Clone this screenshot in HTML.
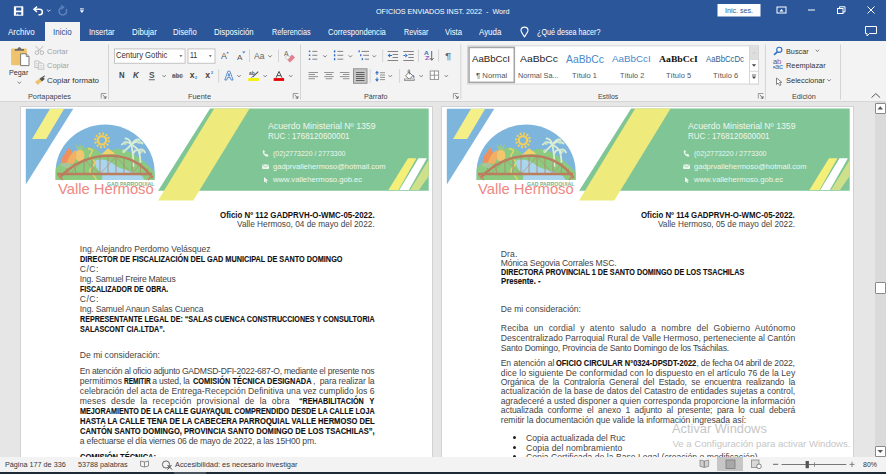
<!DOCTYPE html>
<html><head><meta charset="utf-8">
<style>
html,body{margin:0;padding:0;width:886px;height:474px;overflow:hidden;background:#e6e6e6;}
body{position:relative;font-family:"Liberation Sans",sans-serif;}
.t{position:absolute;white-space:pre;}
.a{position:absolute;}
svg{position:absolute;overflow:visible;}
</style></head><body>
<div class="a" style="left:0;top:0;width:886px;height:41px;background:#2b579a"></div>
<div class="a" style="left:45px;top:22px;width:35px;height:20px;background:#f3f3f3"></div>
<div class="a" style="left:0;top:41px;width:886px;height:60px;background:#f3f3f3"></div>
<div class="a" style="left:0;top:101px;width:886px;height:1px;background:#d6d6d6"></div>
<svg style="left:0;top:0" width="886" height="41"><rect x="13.9" y="6.2" width="9.4" height="9.6" rx="0.6" fill="#fff"/><rect x="16.1" y="7.5" width="5.2" height="3.1" fill="#2b579a"/><rect x="16.1" y="12.2" width="5.2" height="2.5" fill="#2b579a"/><rect x="16.9" y="13.8" width="1.3" height="1" fill="#fff"/><path d="M35 9.3 L39.6 9.3 C43.3 9.3 43.3 14.8 39.6 14.8 L38.5 14.8" fill="none" stroke="#fff" stroke-width="1.5"/><path d="M37 6.6 L34 9.3 L37 12" fill="none" stroke="#fff" stroke-width="1.5"/><path d="M47.2 9.8 L48.8 11.4 L50.4 9.8" fill="none" stroke="#fff" stroke-width="0.9"/><path d="M62.7 7.3 A3.8 3.8 0 1 0 66.1 9.2" fill="none" stroke="#5e82bd" stroke-width="1.5"/><path d="M61.2 5.3 L63.6 7.3 L61.2 9.3" fill="none" stroke="#5e82bd" stroke-width="1.3"/><rect x="80" y="8.4" width="3.8" height="1" fill="#fff"/><path d="M79.8 10.3 L84 10.3 L81.9 12.9 Z" fill="#fff"/><rect x="717.5" y="4" width="43" height="12.5" fill="#fff"/><rect x="777" y="7" width="9" height="6" fill="none" stroke="#fff" stroke-width="1"/><path d="M779.5 11.5 L781.5 9 L783.5 11.5 Z" fill="#fff"/><rect x="808" y="9.5" width="7" height="1" fill="#fff"/><rect x="837.5" y="8.5" width="5.5" height="5" fill="none" stroke="#fff" stroke-width="1"/><path d="M839.5 8.5 L839.5 6.8 L845 6.8 L845 12 L843 12" fill="none" stroke="#fff" stroke-width="1"/><path d="M867.5 6.5 L874.5 13.5 M874.5 6.5 L867.5 13.5" stroke="#fff" stroke-width="1"/><path d="M524.5 36.9 C522.2 33.6 521 31.8 521 30.6 A3.5 3.5 0 0 1 528 30.6 C528 31.8 526.8 33.6 524.5 36.9 Z" fill="none" stroke="#fff" stroke-width="1.1" stroke-linejoin="round"/><path d="M865.5 26.5 L876.5 26.5 L876.5 33.5 L869.5 33.5 L867 36 L867 33.5 L865.5 33.5 Z" fill="none" stroke="#fff" stroke-width="1"/></svg>
<div class="a" style="left:0;top:102px;width:886px;height:355px;background:#e6e6e6"></div>
<div class="a" style="left:875px;top:102px;width:11px;height:355px;background:#dadada"></div>
<div class="a" style="left:20px;top:106px;width:413px;height:360px;background:#d2d2d2"></div>
<div class="a" style="left:21px;top:107px;width:411px;height:360px;background:#fff"></div>
<div class="a" style="left:441px;top:106px;width:413px;height:360px;background:#d2d2d2"></div>
<div class="a" style="left:442px;top:107px;width:411px;height:360px;background:#fff"></div>
<svg style="left:0px;top:0" width="440" height="210"><polygon points="25.8,108.8 73.3,108.8 25.8,184.5" fill="#7db5dd"/><polygon points="50,108.8 64.2,108.8 46.2,139 32,139" fill="#f4ef86"/><polygon points="210.1,108.6 428.7,108.6 428.7,190.8 158.1,190.8" fill="#80c596"/><polygon points="214.2,108.6 249.6,108.6 193.3,200.6 158.1,200.6" fill="#eeea7c"/><polygon points="408,158.2 416.4,158.2 398.5,190 388.4,190" fill="#f4ef78"/><polygon points="418.5,158.2 426.9,158.2 408.8,190 399.3,190" fill="#ffffff"/><polygon points="428.7,160 428.7,176 419,190 410,190" fill="#cfe08a"/><clipPath id="dome0"><path d="M55.6 180 L55.6 172 A49.5 47.5 0 0 1 154.6 172 L154.6 180 Z"/></clipPath><g clip-path="url(#dome0)"><rect x="50" y="120" width="110" height="62" fill="#7db5dd"/><path d="M50 175 C62 160 76 149 88 147.5 C94 147 99 151 103 155 C108 151 114 148.5 120 149 C133 151 146 162 158 176 L158 182 L50 182 Z" fill="#8ccb7f"/><path d="M101 154.8 L108 148.2 L115.5 154 Z" fill="#f2d26a"/><path d="M88 148.5 C95 150 92 152 90 155 C88 158 96 160 95 163 C94 167 86 170 92 174 C96 177 96 179 97 182" fill="none" stroke="#f0d46a" stroke-width="1.3"/><path d="M96 160 C104 158 112 162 116 166 C122 170 132 170 142 176 L146 182 L100 182 C104 178 102 174 100 172 C96 168 94 164 96 160 Z" fill="#a9d6ee"/></g><g fill="#f6cf55"><circle cx="102" cy="140.3" r="4.2" fill="none" stroke="#f6cf55" stroke-width="2.2"/><circle cx="102" cy="140.3" r="6.8" fill="none" stroke="#f6cf55" stroke-width="2.2" stroke-dasharray="1.9 1.66"/></g><ellipse cx="79.8" cy="155.5" rx="4.6" ry="6" fill="#f2c66e"/><path d="M77 149.5 L75.5 143.5 L79 147.5 L80 142.8 L81 147.5 L84.5 143.8 L82.5 149.5 Z" fill="#9cc98a"/><path d="M64 163 C63 156 66 150.5 69.5 147.5 C72 152 73.5 156.5 73 163 Z" fill="#f0905a"/><path d="M67 163.5 C68 157 72 152.5 75.5 150 C77 155 76 160 73.5 164 Z" fill="#f0b066"/><path d="M62 163 C61 159 62.5 156 64.5 154 C66 158 67 161 66.5 164 Z" fill="#ef8e63"/><path d="M60 165 C64 161 70 163 73 167 C69 169 64 168 60 165 Z" fill="#a5c69a"/><g fill="none" stroke="#d9ecd6" stroke-width="1.8" stroke-linecap="round"><path d="M133.5 166 C133.5 158 132.5 150 131.5 144.5"/><path d="M131.5 144.5 C128 141 124.5 141.5 121.8 144.5 M131.5 144.5 C135.5 140.5 139.5 141 142.5 143.5 M131.5 144.5 C130 140 128 138.5 125.5 138.5 M131.5 144.5 C134.5 139.5 137.5 139 139.5 139.5 M131.5 144.5 C128.5 147.5 126 149.5 123.5 152 M131.5 144.5 C135.5 147 138.5 149.5 140.5 153"/><path d="M140.5 162 C140.5 157 139.5 153.5 138.5 150.5 M138.5 150.5 C141.5 148.5 144 149.5 145 152.5 M138.5 150.5 C136 149.5 134.5 151 133.5 153"/></g><g fill="#c9e3c4" opacity="0.9"><circle cx="125" cy="143" r="2"/><circle cx="139" cy="142" r="2"/><circle cx="124" cy="151" r="1.8"/><circle cx="142" cy="151" r="1.8"/></g><path d="M59.4 178 C78 158 98 155.8 109.4 155.8 C122 155.8 140 160 152.6 178" fill="none" stroke="#bb7d5e" stroke-width="2.4"/><path d="M57 174 L152 174" stroke="#bb7d5e" stroke-width="2.6"/><path d="M58 175 L63 180 M152 175 L148 180" stroke="#c4876a" stroke-width="1.6"/><path d="M70 174 L66 168 M76 174 L74 163 M84 174 L84 159.5 M92 174 L92 157.5 M100 174 L100 156.5 M108 174 L108 156 M116 174 L116 156.5 M124 174 L124 157.5 M132 174 L132 159.5 M140 174 L141 163 M146 174 L147.5 168.5" stroke="#b58468" stroke-width="0.8"/><path d="M70 174 L84 159.5 L100 174 L116 156.5 L132 174 L141 163" fill="none" stroke="#b58468" stroke-width="0.6"/></svg>
<svg style="left:0px;top:0" width="440" height="210"><path d="M263 150.5 C262 153 264.5 156.5 267.5 156.8 L268.5 155.2 L266.5 153.8 L265.8 154.6 C265 154 264.4 153.2 264.2 152.4 L265 151.8 L263.8 150 Z" fill="#eef7ef"/><rect x="262.2" y="164.5" width="6.8" height="4.6" rx="1.2" fill="#eef7ef"/><path d="M262.5 165 L265.6 167.2 L268.7 165" fill="none" stroke="#80c596" stroke-width="0.7"/><path d="M264 177 L264 182.5 L265.3 181.2 L266.5 183 L267.4 182.5 L266.3 180.7 L268 180.5 Z" fill="#eef7ef"/></svg>
<svg style="left:420.5px;top:0" width="440" height="210"><polygon points="25.8,108.8 73.3,108.8 25.8,184.5" fill="#7db5dd"/><polygon points="50,108.8 64.2,108.8 46.2,139 32,139" fill="#f4ef86"/><polygon points="210.1,108.6 428.7,108.6 428.7,190.8 158.1,190.8" fill="#80c596"/><polygon points="214.2,108.6 249.6,108.6 193.3,200.6 158.1,200.6" fill="#eeea7c"/><polygon points="408,158.2 416.4,158.2 398.5,190 388.4,190" fill="#f4ef78"/><polygon points="418.5,158.2 426.9,158.2 408.8,190 399.3,190" fill="#ffffff"/><polygon points="428.7,160 428.7,176 419,190 410,190" fill="#cfe08a"/><clipPath id="dome420"><path d="M55.6 180 L55.6 172 A49.5 47.5 0 0 1 154.6 172 L154.6 180 Z"/></clipPath><g clip-path="url(#dome420)"><rect x="50" y="120" width="110" height="62" fill="#7db5dd"/><path d="M50 175 C62 160 76 149 88 147.5 C94 147 99 151 103 155 C108 151 114 148.5 120 149 C133 151 146 162 158 176 L158 182 L50 182 Z" fill="#8ccb7f"/><path d="M101 154.8 L108 148.2 L115.5 154 Z" fill="#f2d26a"/><path d="M88 148.5 C95 150 92 152 90 155 C88 158 96 160 95 163 C94 167 86 170 92 174 C96 177 96 179 97 182" fill="none" stroke="#f0d46a" stroke-width="1.3"/><path d="M96 160 C104 158 112 162 116 166 C122 170 132 170 142 176 L146 182 L100 182 C104 178 102 174 100 172 C96 168 94 164 96 160 Z" fill="#a9d6ee"/></g><g fill="#f6cf55"><circle cx="102" cy="140.3" r="4.2" fill="none" stroke="#f6cf55" stroke-width="2.2"/><circle cx="102" cy="140.3" r="6.8" fill="none" stroke="#f6cf55" stroke-width="2.2" stroke-dasharray="1.9 1.66"/></g><ellipse cx="79.8" cy="155.5" rx="4.6" ry="6" fill="#f2c66e"/><path d="M77 149.5 L75.5 143.5 L79 147.5 L80 142.8 L81 147.5 L84.5 143.8 L82.5 149.5 Z" fill="#9cc98a"/><path d="M64 163 C63 156 66 150.5 69.5 147.5 C72 152 73.5 156.5 73 163 Z" fill="#f0905a"/><path d="M67 163.5 C68 157 72 152.5 75.5 150 C77 155 76 160 73.5 164 Z" fill="#f0b066"/><path d="M62 163 C61 159 62.5 156 64.5 154 C66 158 67 161 66.5 164 Z" fill="#ef8e63"/><path d="M60 165 C64 161 70 163 73 167 C69 169 64 168 60 165 Z" fill="#a5c69a"/><g fill="none" stroke="#d9ecd6" stroke-width="1.8" stroke-linecap="round"><path d="M133.5 166 C133.5 158 132.5 150 131.5 144.5"/><path d="M131.5 144.5 C128 141 124.5 141.5 121.8 144.5 M131.5 144.5 C135.5 140.5 139.5 141 142.5 143.5 M131.5 144.5 C130 140 128 138.5 125.5 138.5 M131.5 144.5 C134.5 139.5 137.5 139 139.5 139.5 M131.5 144.5 C128.5 147.5 126 149.5 123.5 152 M131.5 144.5 C135.5 147 138.5 149.5 140.5 153"/><path d="M140.5 162 C140.5 157 139.5 153.5 138.5 150.5 M138.5 150.5 C141.5 148.5 144 149.5 145 152.5 M138.5 150.5 C136 149.5 134.5 151 133.5 153"/></g><g fill="#c9e3c4" opacity="0.9"><circle cx="125" cy="143" r="2"/><circle cx="139" cy="142" r="2"/><circle cx="124" cy="151" r="1.8"/><circle cx="142" cy="151" r="1.8"/></g><path d="M59.4 178 C78 158 98 155.8 109.4 155.8 C122 155.8 140 160 152.6 178" fill="none" stroke="#bb7d5e" stroke-width="2.4"/><path d="M57 174 L152 174" stroke="#bb7d5e" stroke-width="2.6"/><path d="M58 175 L63 180 M152 175 L148 180" stroke="#c4876a" stroke-width="1.6"/><path d="M70 174 L66 168 M76 174 L74 163 M84 174 L84 159.5 M92 174 L92 157.5 M100 174 L100 156.5 M108 174 L108 156 M116 174 L116 156.5 M124 174 L124 157.5 M132 174 L132 159.5 M140 174 L141 163 M146 174 L147.5 168.5" stroke="#b58468" stroke-width="0.8"/><path d="M70 174 L84 159.5 L100 174 L116 156.5 L132 174 L141 163" fill="none" stroke="#b58468" stroke-width="0.6"/></svg>
<svg style="left:420.5px;top:0" width="440" height="210"><path d="M263 150.5 C262 153 264.5 156.5 267.5 156.8 L268.5 155.2 L266.5 153.8 L265.8 154.6 C265 154 264.4 153.2 264.2 152.4 L265 151.8 L263.8 150 Z" fill="#eef7ef"/><rect x="262.2" y="164.5" width="6.8" height="4.6" rx="1.2" fill="#eef7ef"/><path d="M262.5 165 L265.6 167.2 L268.7 165" fill="none" stroke="#80c596" stroke-width="0.7"/><path d="M264 177 L264 182.5 L265.3 181.2 L266.5 183 L267.4 182.5 L266.3 180.7 L268 180.5 Z" fill="#eef7ef"/></svg>
<div class="a" style="left:512.6px;top:436.3px;width:3px;height:3px;border-radius:50%;background:#222"></div>
<div class="a" style="left:512.6px;top:445.7px;width:3px;height:3px;border-radius:50%;background:#222"></div>
<div class="a" style="left:512.6px;top:455.0px;width:3px;height:3px;border-radius:50%;background:#222"></div>
<div class="a" style="left:875px;top:103px;width:9px;height:9px;border:1px solid #8a8a8a;background:#fff;border-radius:1px"></div>
<svg style="left:0;top:0" width="886" height="474"><path d="M877.5 109.5 L880.3 106.3 L883 109.5 Z" fill="#555"/></svg>
<div class="a" style="left:875px;top:282px;width:9px;height:10px;border:1px solid #8a8a8a;background:#fff;border-radius:1px"></div>
<div class="a" style="left:875px;top:446px;width:9px;height:9px;border:1px solid #8a8a8a;background:#fff;border-radius:1px"></div>
<svg style="left:0;top:0" width="886" height="474"><path d="M877.5 450 L880.3 453 L883 450 Z" fill="#555"/></svg>
<svg style="left:0;top:0" width="886" height="105"><rect x="108.0" y="44.5" width="1" height="55.0" fill="#d4d4d4"/><rect x="300.0" y="44.5" width="1" height="55.0" fill="#d4d4d4"/><rect x="460.3" y="44.5" width="1" height="55.0" fill="#d4d4d4"/><rect x="764.9" y="44.5" width="1" height="55.0" fill="#d4d4d4"/><rect x="840.0" y="44.5" width="1" height="55.0" fill="#d4d4d4"/><rect x="249.0" y="49.5" width="1" height="12.5" fill="#d4d4d4"/><rect x="278.0" y="49.5" width="1" height="12.5" fill="#d4d4d4"/><rect x="218.2" y="69" width="1" height="14" fill="#d4d4d4"/><rect x="382.2" y="49.5" width="1" height="12.5" fill="#d4d4d4"/><rect x="418.0" y="49.5" width="1" height="12.5" fill="#d4d4d4"/><rect x="438.1" y="49.5" width="1" height="12.5" fill="#d4d4d4"/><rect x="369.7" y="69" width="1" height="14" fill="#d4d4d4"/><rect x="399.1" y="69" width="1" height="14" fill="#d4d4d4"/><rect x="11.1" y="48.5" width="15.7" height="16.8" rx="1" fill="#efc36d"/><path d="M14.8 50.8 L14.8 49 L17.5 49 C17.8 46.5 21 46.5 21.3 49 L24 49 L24 50.8 Z" fill="#6b6b6b"/><path d="M20.6 53.8 L26.3 53.8 L29 56.5 L29 65.6 L20.6 65.6 Z" fill="#fff" stroke="#6e6e6e" stroke-width="0.9"/><path d="M26.3 53.8 L26.3 56.5 L29 56.5" fill="none" stroke="#6e6e6e" stroke-width="0.8"/><path d="M17.6 81.69999999999999 L19.3 83.5 L21.0 81.69999999999999" fill="none" stroke="#666" stroke-width="0.8"/><circle cx="36.9" cy="52.7" r="1.8" fill="none" stroke="#b0b0b0" stroke-width="0.9"/><circle cx="41.9" cy="52.7" r="1.8" fill="none" stroke="#b0b0b0" stroke-width="0.9"/><path d="M35.5 46.2 L41 51.2 M43.3 46.2 L37.8 51.2" stroke="#b0b0b0" stroke-width="0.9"/><path d="M34.8 61 L38.8 61 L40.3 62.5 L40.3 67.5 L34.8 67.5 Z" fill="none" stroke="#b5b5b5" stroke-width="0.8"/><path d="M38.3 63 L42.3 63 L43.8 64.5 L43.8 69.3 L38.3 69.3 Z" fill="#f3f3f3" stroke="#b5b5b5" stroke-width="0.8"/><path d="M39.5 65.5 L42.5 65.5 M39.5 67.3 L42.5 67.3 M36 63.5 L37.5 63.5 M36 65.3 L37.5 65.3" stroke="#c0c0c0" stroke-width="0.6"/><path d="M35 81.8 L39.8 78.5 L42 81.2 L37.6 85 Z" fill="#efc36d"/><path d="M39.5 78.8 L42.6 76.5 L44.8 79 L42 81.5 Z" fill="#555"/><path d="M43 76.8 L45 75.8" stroke="#555" stroke-width="1"/><path d="M101.2 98.5 L101.2 93.5 L106.2 93.5" fill="none" stroke="#777" stroke-width="0.7"/><path d="M102.7 95.0 L105.9 98.2 M105.9 96.0 L105.9 98.2 L103.7 98.2" fill="none" stroke="#555" stroke-width="0.8"/><rect x="114.5" y="48.9" width="70.6" height="14.4" fill="#fff" stroke="#c3c3c3" stroke-width="1"/><rect x="188" y="48.9" width="27" height="14.4" fill="#fff" stroke="#c3c3c3" stroke-width="1"/><path d="M179.5 55.3 L182.3 55.3 L180.9 57 Z" fill="#444"/><path d="M208.9 55.3 L211.7 55.3 L210.3 57 Z" fill="#444"/><path d="M162.5 75.1 L164.2 76.9 L165.89999999999998 75.1" fill="none" stroke="#666" stroke-width="0.8"/><rect x="148.8" y="79.4" width="6.0" height="0.8" fill="#444"/><rect x="172" y="75.6" width="11.2" height="0.8" fill="#666"/><path d="M226.1 53.3 L227.6 51.7 L229.1 53.3 Z" fill="#3a7bd5"/><path d="M242.2 51.6 L245.4 51.6 L243.8 53.4 Z" fill="#3a7bd5"/><path d="M268.40000000000003 55.300000000000004 L270.1 57.1 L271.8 55.300000000000004" fill="none" stroke="#666" stroke-width="0.8"/><path d="M287 59.5 L292 54.5 L295 57.5 L290 62.5 Z" fill="#e57f8c"/><path d="M285 57.5 L287.5 55 L290 57.5 L287.5 60 Z" fill="#f2f2f2" stroke="#aaa" stroke-width="0.5"/><path d="M224.8 80 L227.9 71.2 L229.9 71.2 L233.1 80 L231.1 80 L230.3 77.6 L227.5 77.6 L226.8 80 Z M228.0 76 L229.8 76 L228.9 73.4 Z" fill="none" stroke="#4f86c8" stroke-width="0.9" stroke-linejoin="round"/><path d="M237.3 75.1 L239 76.9 L240.7 75.1" fill="none" stroke="#666" stroke-width="0.8"/><rect x="248.2" y="78.1" width="10.7" height="2.8" fill="#f4f000"/><path d="M252.5 77.2 L258.2 71.6" stroke="#555" stroke-width="1.1"/><path d="M251.4 77.6 L252.6 76.4" stroke="#2e6fc4" stroke-width="0.9"/><path d="M263.5 75.1 L265.2 76.9 L266.9 75.1" fill="none" stroke="#666" stroke-width="0.8"/><rect x="273.7" y="78.1" width="10.4" height="2.8" fill="#e80000"/><path d="M276 77.8 L279 71.4 L282 77.8 M277 75.6 L281 75.6" fill="none" stroke="#444" stroke-width="0.9"/><path d="M289.0 75.1 L290.7 76.9 L292.4 75.1" fill="none" stroke="#666" stroke-width="0.8"/><path d="M293.2 98.5 L293.2 93.5 L298.2 93.5" fill="none" stroke="#777" stroke-width="0.7"/><path d="M294.7 95.0 L297.9 98.2 M297.9 96.0 L297.9 98.2 L295.7 98.2" fill="none" stroke="#555" stroke-width="0.8"/><rect x="308.8" y="50.599999999999994" width="1.5" height="1.5" fill="#2e6fc4"/><rect x="312.3" y="50.9" width="5" height="0.9" fill="#777"/><rect x="308.8" y="54.49999999999999" width="1.5" height="1.5" fill="#2e6fc4"/><rect x="312.3" y="54.8" width="5" height="0.9" fill="#777"/><rect x="308.8" y="58.39999999999999" width="1.5" height="1.5" fill="#2e6fc4"/><rect x="312.3" y="58.699999999999996" width="5" height="0.9" fill="#777"/><path d="M323.2 55.300000000000004 L324.9 57.1 L326.59999999999997 55.300000000000004" fill="none" stroke="#666" stroke-width="0.8"/><rect x="333.9" y="50.3" width="1.4" height="2.2" fill="#2e6fc4"/><rect x="337.4" y="50.9" width="5.8" height="0.9" fill="#777"/><rect x="333.9" y="54.199999999999996" width="1.4" height="2.2" fill="#2e6fc4"/><rect x="337.4" y="54.8" width="5.8" height="0.9" fill="#777"/><rect x="333.9" y="58.099999999999994" width="1.4" height="2.2" fill="#2e6fc4"/><rect x="337.4" y="58.699999999999996" width="5.8" height="0.9" fill="#777"/><path d="M348.7 55.300000000000004 L350.4 57.1 L352.09999999999997 55.300000000000004" fill="none" stroke="#666" stroke-width="0.8"/><rect x="358.5" y="50.3" width="1.3" height="2" fill="#2e6fc4"/><rect x="361.5" y="50.9" width="7.5" height="0.9" fill="#777"/><rect x="360.1" y="54.199999999999996" width="1.3" height="2" fill="#2e6fc4"/><rect x="363.1" y="54.8" width="5.9" height="0.9" fill="#777"/><rect x="361.7" y="58.099999999999994" width="1.3" height="2" fill="#2e6fc4"/><rect x="364.7" y="58.699999999999996" width="4.3" height="0.9" fill="#777"/><path d="M372.6 55.300000000000004 L374.3 57.1 L376.0 55.300000000000004" fill="none" stroke="#666" stroke-width="0.8"/><rect x="387.6" y="51" width="10.5" height="0.9" fill="#777"/><rect x="392.6" y="54" width="5.5" height="0.9" fill="#777"/><rect x="392.6" y="57" width="5.5" height="0.9" fill="#777"/><rect x="387.6" y="60" width="10.5" height="0.9" fill="#777"/><path d="M387.6 55.5 L390.1 53.5 L390.1 57.5 Z M389.6 55 L392.1 55 L392.1 56 L389.6 56 Z" fill="#2e6fc4"/><rect x="403.3" y="51" width="10.5" height="0.9" fill="#777"/><rect x="408.3" y="54" width="5.5" height="0.9" fill="#777"/><rect x="408.3" y="57" width="5.5" height="0.9" fill="#777"/><rect x="403.3" y="60" width="10.5" height="0.9" fill="#777"/><path d="M407.8 55.5 L405.3 53.5 L405.3 57.5 Z M403.3 55 L405.8 55 L405.8 56 L403.3 56 Z" fill="#2e6fc4"/><path d="M431.7 51 L431.7 60 M429.8 58 L431.7 60.3 L433.6 58" fill="none" stroke="#555" stroke-width="0.9"/><rect x="308.5" y="72.0" width="9.5" height="0.9" fill="#888"/><rect x="308.5" y="74.1" width="6.5" height="0.9" fill="#888"/><rect x="308.5" y="76.2" width="9.5" height="0.9" fill="#888"/><rect x="308.5" y="78.3" width="6.5" height="0.9" fill="#888"/><rect x="324.2" y="72.0" width="9.5" height="0.9" fill="#888"/><rect x="325.7" y="74.1" width="6.5" height="0.9" fill="#888"/><rect x="324.2" y="76.2" width="9.5" height="0.9" fill="#888"/><rect x="325.7" y="78.3" width="6.5" height="0.9" fill="#888"/><rect x="339.9" y="72.0" width="9.5" height="0.9" fill="#888"/><rect x="342.9" y="74.1" width="6.5" height="0.9" fill="#888"/><rect x="339.9" y="76.2" width="9.5" height="0.9" fill="#888"/><rect x="342.9" y="78.3" width="6.5" height="0.9" fill="#888"/><rect x="353.5" y="68.8" width="13.5" height="14.5" fill="#c6c6c6" stroke="#919191" stroke-width="1"/><rect x="356" y="72" width="8.5" height="0.9" fill="#555"/><rect x="356" y="74" width="8.5" height="0.9" fill="#555"/><rect x="356" y="76" width="8.5" height="0.9" fill="#555"/><rect x="356" y="78" width="8.5" height="0.9" fill="#555"/><rect x="356" y="80" width="8.5" height="0.9" fill="#555"/><path d="M377 72.5 L377 75 M377 77.5 L377 80" stroke="#2e6fc4" stroke-width="1"/><path d="M375 73.3 L377 70.8 L379 73.3 Z M375 79.2 L377 81.7 L379 79.2 Z" fill="#2e6fc4"/><rect x="380" y="72.3" width="5" height="0.9" fill="#888"/><rect x="380" y="74.6" width="5" height="0.9" fill="#888"/><rect x="380" y="76.89999999999999" width="5" height="0.9" fill="#888"/><rect x="380" y="79.2" width="5" height="0.9" fill="#888"/><path d="M388.6 75.1 L390.3 76.9 L392.0 75.1" fill="none" stroke="#666" stroke-width="0.8"/><path d="M405.6 75.8 L409.2 72.2 L412.8 75.8 L409.2 79.4 Z" fill="#fff" stroke="#666" stroke-width="0.9"/><path d="M408.2 73 L408.2 70.5 C408.2 69.6 409.6 69.6 409.6 70.5 L409.6 74.5" fill="none" stroke="#666" stroke-width="0.8"/><path d="M413.2 74.8 C414.6 76.2 414.8 77.4 413.9 78 C413.0 77.4 412.9 76.2 413.2 74.8 Z" fill="#2e6fc4"/><rect x="404.3" y="79" width="10.2" height="1.6" fill="#fafafa" stroke="#777" stroke-width="0.7"/><path d="M419.5 75.1 L421.2 76.9 L422.9 75.1" fill="none" stroke="#666" stroke-width="0.8"/><rect x="430.2" y="71" width="8.4" height="8.4" fill="#fff" stroke="#8c8c8c" stroke-width="0.9"/><path d="M434.4 71 L434.4 79.4 M430.2 75.2 L438.6 75.2" stroke="#8c8c8c" stroke-width="0.9"/><path d="M444.6 75.1 L446.3 76.9 L448.0 75.1" fill="none" stroke="#666" stroke-width="0.8"/><path d="M453.4 98.5 L453.4 93.5 L458.4 93.5" fill="none" stroke="#777" stroke-width="0.7"/><path d="M454.9 95.0 L458.09999999999997 98.2 M458.09999999999997 96.0 L458.09999999999997 98.2 L455.9 98.2" fill="none" stroke="#555" stroke-width="0.8"/><rect x="467.5" y="45.8" width="291" height="38.2" fill="#fff" stroke="#d6d6d6" stroke-width="1"/><rect x="469" y="47.4" width="45.3" height="35" fill="#fff" stroke="#a6a6a6" stroke-width="1.6"/><rect x="749.5" y="45.8" width="9" height="38.2" fill="#fff" stroke="#d6d6d6" stroke-width="1"/><rect x="750" y="46.3" width="8" height="13" fill="#dedede"/><rect x="749.5" y="59.3" width="9" height="12" fill="none" stroke="#d6d6d6" stroke-width="1"/><path d="M752.8 53.5 L754 52.3 L755.2 53.5" fill="none" stroke="#b8b8b8" stroke-width="0.7"/><path d="M751.9 64.2 L756.1 64.2 L754 66.8 Z" fill="#444"/><rect x="751.9" y="74.6" width="4.2" height="0.8" fill="#444"/><path d="M751.9 76.4 L756.1 76.4 L754 79 Z" fill="#444"/><path d="M758.3 98.5 L758.3 93.5 L763.3 93.5" fill="none" stroke="#777" stroke-width="0.7"/><path d="M759.8 95.0 L763.0 98.2 M763.0 96.0 L763.0 98.2 L760.8 98.2" fill="none" stroke="#555" stroke-width="0.8"/><circle cx="779.3" cy="49.8" r="2.6" fill="none" stroke="#2e6fc4" stroke-width="1.1"/><path d="M777.4 51.8 L774 54.8" stroke="#2e6fc4" stroke-width="1.6"/><path d="M815.6999999999999 49.7 L817.4 51.5 L819.1 49.7" fill="none" stroke="#666" stroke-width="0.8"/><path d="M776.5 78 L776.5 84.5 L778 83 L779.7 85.5 L781 84.8 L779.6 82.4 L781.8 82.3 Z" fill="#fff" stroke="#666" stroke-width="0.8"/><path d="M827.4 79.3 L829.1 81.10000000000001 L830.8000000000001 79.3" fill="none" stroke="#666" stroke-width="0.8"/><path d="M773.2 67.2 L775.2 67.2 M773.6 66 L774.6 67.2 L773.6 68.4" fill="none" stroke="#2e6fc4" stroke-width="0.8"/><path d="M871.5 97.6 L875.8 93.6 L880.1 97.6" fill="none" stroke="#555" stroke-width="1"/></svg>
<div class="t" style="left:375.60px;top:7.80px;font:normal 8px/8px 'Liberation Sans',sans-serif;color:#fff;transform:scaleX(0.8966);transform-origin:0 0;">OFICIOS ENVIADOS INST. 2022  -  Word</div>
<div class="t" style="left:724.80px;top:6.80px;font:normal 8px/8px 'Liberation Sans',sans-serif;color:#2b579a;transform:scaleX(0.8899);transform-origin:0 0;">Inic. ses.</div>
<div class="t" style="left:8.20px;top:27.89px;font:normal 8.6px/8.6px 'Liberation Sans',sans-serif;color:#fff;transform:scaleX(0.9282);transform-origin:0 0;">Archivo</div>
<div class="t" style="left:88.60px;top:27.89px;font:normal 8.6px/8.6px 'Liberation Sans',sans-serif;color:#fff;transform:scaleX(0.8785);transform-origin:0 0;">Insertar</div>
<div class="t" style="left:131.60px;top:27.89px;font:normal 8.6px/8.6px 'Liberation Sans',sans-serif;color:#fff;transform:scaleX(0.9106);transform-origin:0 0;">Dibujar</div>
<div class="t" style="left:173.30px;top:27.89px;font:normal 8.6px/8.6px 'Liberation Sans',sans-serif;color:#fff;transform:scaleX(0.8855);transform-origin:0 0;">Diseño</div>
<div class="t" style="left:214.40px;top:27.89px;font:normal 8.6px/8.6px 'Liberation Sans',sans-serif;color:#fff;transform:scaleX(0.9032);transform-origin:0 0;">Disposición</div>
<div class="t" style="left:272.00px;top:27.89px;font:normal 8.6px/8.6px 'Liberation Sans',sans-serif;color:#fff;transform:scaleX(0.8395);transform-origin:0 0;">Referencias</div>
<div class="t" style="left:328.40px;top:27.89px;font:normal 8.6px/8.6px 'Liberation Sans',sans-serif;color:#fff;transform:scaleX(0.8831);transform-origin:0 0;">Correspondencia</div>
<div class="t" style="left:403.70px;top:27.89px;font:normal 8.6px/8.6px 'Liberation Sans',sans-serif;color:#fff;transform:scaleX(0.8339);transform-origin:0 0;">Revisar</div>
<div class="t" style="left:444.70px;top:27.89px;font:normal 8.6px/8.6px 'Liberation Sans',sans-serif;color:#fff;transform:scaleX(0.8917);transform-origin:0 0;">Vista</div>
<div class="t" style="left:479.00px;top:27.89px;font:normal 8.6px/8.6px 'Liberation Sans',sans-serif;color:#fff;transform:scaleX(0.9208);transform-origin:0 0;">Ayuda</div>
<div class="t" style="left:536.60px;top:27.89px;font:normal 8.6px/8.6px 'Liberation Sans',sans-serif;color:#fff;transform:scaleX(0.8346);transform-origin:0 0;">¿Qué desea hacer?</div>
<div class="t" style="left:52.60px;top:27.89px;font:normal 8.6px/8.6px 'Liberation Sans',sans-serif;color:#1f4e8f;transform:scaleX(0.9321);transform-origin:0 0;">Inicio</div>
<div class="t" style="left:57.60px;top:180.65px;font:normal 15.0px/15.0px 'Liberation Sans',sans-serif;color:#ef8882;transform:scaleX(0.9839);transform-origin:0 0;">Valle Hermoso</div>
<div class="t" style="left:106.60px;top:181.75px;font:bold 5.0px/5.0px 'Liberation Sans',sans-serif;color:#7fb086;transform:scaleX(1.0339);transform-origin:0 0;">GAD PARROQUIAL</div>
<div class="t" style="left:267.60px;top:122.46px;font:normal 8.4px/8.4px 'Liberation Sans',sans-serif;color:#eef7ef;transform:scaleX(1.0376);transform-origin:0 0;">Acuerdo Ministerial Nº 1359</div>
<div class="t" style="left:267.60px;top:132.36px;font:normal 8.4px/8.4px 'Liberation Sans',sans-serif;color:#eef7ef;transform:scaleX(0.9511);transform-origin:0 0;">RUC : 1768120600001</div>
<div class="t" style="left:273.20px;top:150.28px;font:normal 7.2px/7.2px 'Liberation Sans',sans-serif;color:#eef7ef;transform:scaleX(0.9699);transform-origin:0 0;">(02)2773220 / 2773300</div>
<div class="t" style="left:273.20px;top:163.08px;font:normal 7.2px/7.2px 'Liberation Sans',sans-serif;color:#eef7ef;transform:scaleX(1.0497);transform-origin:0 0;">gadprvallehermoso@hotmail.com</div>
<div class="t" style="left:273.20px;top:175.58px;font:normal 7.2px/7.2px 'Liberation Sans',sans-serif;color:#eef7ef;transform:scaleX(1.0683);transform-origin:0 0;">www.vallehermoso.gob.ec</div>
<div class="t" style="left:478.10px;top:180.65px;font:normal 15.0px/15.0px 'Liberation Sans',sans-serif;color:#ef8882;transform:scaleX(0.9839);transform-origin:0 0;">Valle Hermoso</div>
<div class="t" style="left:527.10px;top:181.75px;font:bold 5.0px/5.0px 'Liberation Sans',sans-serif;color:#7fb086;transform:scaleX(1.0339);transform-origin:0 0;">GAD PARROQUIAL</div>
<div class="t" style="left:688.10px;top:122.46px;font:normal 8.4px/8.4px 'Liberation Sans',sans-serif;color:#eef7ef;transform:scaleX(1.0376);transform-origin:0 0;">Acuerdo Ministerial Nº 1359</div>
<div class="t" style="left:688.10px;top:132.36px;font:normal 8.4px/8.4px 'Liberation Sans',sans-serif;color:#eef7ef;transform:scaleX(0.9511);transform-origin:0 0;">RUC : 1768120600001</div>
<div class="t" style="left:693.70px;top:150.28px;font:normal 7.2px/7.2px 'Liberation Sans',sans-serif;color:#eef7ef;transform:scaleX(0.9699);transform-origin:0 0;">(02)2773220 / 2773300</div>
<div class="t" style="left:693.70px;top:163.08px;font:normal 7.2px/7.2px 'Liberation Sans',sans-serif;color:#eef7ef;transform:scaleX(1.0497);transform-origin:0 0;">gadprvallehermoso@hotmail.com</div>
<div class="t" style="left:693.70px;top:175.58px;font:normal 7.2px/7.2px 'Liberation Sans',sans-serif;color:#eef7ef;transform:scaleX(1.0683);transform-origin:0 0;">www.vallehermoso.gob.ec</div>
<div class="t" style="left:220.00px;top:211.53px;font:bold 8.2px/8.2px 'Liberation Sans',sans-serif;color:#111;transform:scaleX(0.9646);transform-origin:0 0;">Oficio Nº 112 GADPRVH-O-WMC-05-2022.</div>
<div class="t" style="left:236.90px;top:220.26px;font:normal 8.4px/8.4px 'Liberation Sans',sans-serif;color:#444444;transform:scaleX(0.9870);transform-origin:0 0;">Valle Hermoso, 04 de mayo del 2022.</div>
<div class="t" style="left:79.80px;top:245.49px;font:normal 8.6px/8.6px 'Liberation Sans',sans-serif;color:#444444;letter-spacing:-0.035px;transform-origin:0 0;">Ing. Alejandro Perdomo Velásquez</div>
<div class="t" style="left:79.80px;top:255.06px;font:bold 8.4px/8.4px 'Liberation Sans',sans-serif;color:#111;transform:scaleX(0.8715);transform-origin:0 0;-webkit-text-stroke:0.12px #111;">DIRECTOR DE FISCALIZACIÓN DEL GAD MUNICIPAL DE SANTO DOMINGO</div>
<div class="t" style="left:79.80px;top:265.39px;font:normal 8.6px/8.6px 'Liberation Sans',sans-serif;color:#444444;letter-spacing:0.438px;transform-origin:0 0;">C/C:</div>
<div class="t" style="left:79.80px;top:275.39px;font:normal 8.6px/8.6px 'Liberation Sans',sans-serif;color:#444444;letter-spacing:-0.224px;transform-origin:0 0;">Ing. Samuel Freire Mateus</div>
<div class="t" style="left:79.80px;top:285.06px;font:bold 8.4px/8.4px 'Liberation Sans',sans-serif;color:#111;transform:scaleX(0.8360);transform-origin:0 0;-webkit-text-stroke:0.12px #111;">FISCALIZADOR DE OBRA.</div>
<div class="t" style="left:79.80px;top:295.39px;font:normal 8.6px/8.6px 'Liberation Sans',sans-serif;color:#444444;letter-spacing:0.438px;transform-origin:0 0;">C/C:</div>
<div class="t" style="left:79.80px;top:305.39px;font:normal 8.6px/8.6px 'Liberation Sans',sans-serif;color:#444444;letter-spacing:-0.167px;transform-origin:0 0;">Ing. Samuel Anaun Salas Cuenca</div>
<div class="t" style="left:79.80px;top:315.16px;font:bold 8.4px/8.4px 'Liberation Sans',sans-serif;color:#111;transform:scaleX(0.8520);transform-origin:0 0;-webkit-text-stroke:0.12px #111;">REPRESENTANTE LEGAL DE: “SALAS CUENCA CONSTRUCCIONES Y CONSULTORIA</div>
<div class="t" style="left:79.80px;top:325.26px;font:bold 8.4px/8.4px 'Liberation Sans',sans-serif;color:#111;transform:scaleX(0.8529);transform-origin:0 0;-webkit-text-stroke:0.12px #111;">SALASCONT CIA.LTDA”.</div>
<div class="t" style="left:79.80px;top:351.39px;font:normal 8.6px/8.6px 'Liberation Sans',sans-serif;color:#444444;letter-spacing:-0.003px;transform-origin:0 0;">De mi consideración:</div>
<div class="t" style="left:79.80px;top:366.99px;font:normal 8.6px/8.6px 'Liberation Sans',sans-serif;color:#444444;letter-spacing:-0.258px;transform-origin:0 0;">En atención al oficio adjunto GADMSD-DFI-2022-687-O, mediante el presente nos</div>
<div class="t" style="left:79.70px;top:376.99px;font:normal 8.6px/8.6px 'Liberation Sans',sans-serif;color:#444444;letter-spacing:0.030px;transform-origin:0 0;">permitimos</div>
<div class="t" style="left:123.70px;top:376.66px;font:bold 8.4px/8.4px 'Liberation Sans',sans-serif;color:#111;transform:scaleX(0.7782);transform-origin:0 0;-webkit-text-stroke:0.12px #111;">REMITIR</div>
<div class="t" style="left:152.20px;top:376.99px;font:normal 8.6px/8.6px 'Liberation Sans',sans-serif;color:#444444;letter-spacing:-0.206px;transform-origin:0 0;">a usted, la</div>
<div class="t" style="left:192.80px;top:376.66px;font:bold 8.4px/8.4px 'Liberation Sans',sans-serif;color:#111;transform:scaleX(0.8832);transform-origin:0 0;-webkit-text-stroke:0.12px #111;">COMISIÓN TÉCNICA DESIGNADA</div>
<div class="t" style="left:313.00px;top:376.99px;font:normal 8.6px/8.6px 'Liberation Sans',sans-serif;color:#444444;letter-spacing:-0.591px;transform-origin:0 0;">,</div>
<div class="t" style="left:319.70px;top:376.99px;font:normal 8.6px/8.6px 'Liberation Sans',sans-serif;color:#444444;letter-spacing:-0.136px;transform-origin:0 0;">para realizar la</div>
<div class="t" style="left:79.80px;top:387.09px;font:normal 8.6px/8.6px 'Liberation Sans',sans-serif;color:#444444;letter-spacing:0.038px;transform-origin:0 0;">celebración del acta de Entrega-Recepción Definitiva una vez cumplido los 6</div>
<div class="t" style="left:79.70px;top:397.09px;font:normal 8.6px/8.6px 'Liberation Sans',sans-serif;color:#444444;letter-spacing:0.175px;transform-origin:0 0;">meses  desde  la  recepción  provisional  de  la  obra</div>
<div class="t" style="left:299.10px;top:396.76px;font:bold 8.4px/8.4px 'Liberation Sans',sans-serif;color:#111;transform:scaleX(0.8603);transform-origin:0 0;-webkit-text-stroke:0.12px #111;">“REHABILITACIÓN   Y</div>
<div class="t" style="left:79.80px;top:406.76px;font:bold 8.4px/8.4px 'Liberation Sans',sans-serif;color:#111;transform:scaleX(0.8621);transform-origin:0 0;-webkit-text-stroke:0.12px #111;">MEJORAMIENTO DE LA CALLE GUAYAQUIL COMPRENDIDO DESDE LA CALLE LOJA</div>
<div class="t" style="left:79.80px;top:416.76px;font:bold 8.4px/8.4px 'Liberation Sans',sans-serif;color:#111;transform:scaleX(0.9083);transform-origin:0 0;-webkit-text-stroke:0.12px #111;">HASTA LA CALLE TENA DE LA CABECERA PARROQUIAL VALLE HERMOSO DEL</div>
<div class="t" style="left:79.80px;top:426.86px;font:bold 8.4px/8.4px 'Liberation Sans',sans-serif;color:#111;transform:scaleX(0.9026);transform-origin:0 0;-webkit-text-stroke:0.12px #111;">CANTÓN SANTO DOMINGO, PROVINCIA SANTO DOMINGO DE LOS TSACHILAS”,</div>
<div class="t" style="left:79.80px;top:437.19px;font:normal 8.6px/8.6px 'Liberation Sans',sans-serif;color:#444444;letter-spacing:-0.200px;transform-origin:0 0;">a efectuarse el día viernes 06 de mayo de 2022, a las 15H00 pm.</div>
<div class="t" style="left:79.80px;top:453.06px;font:bold 8.4px/8.4px 'Liberation Sans',sans-serif;color:#111;transform:scaleX(0.8974);transform-origin:0 0;-webkit-text-stroke:0.12px #111;">COMISIÓN TÉCNICA:</div>
<div class="t" style="left:641.30px;top:211.53px;font:bold 8.2px/8.2px 'Liberation Sans',sans-serif;color:#111;transform:scaleX(0.9597);transform-origin:0 0;">Oficio Nº 114 GADPRVH-O-WMC-05-2022.</div>
<div class="t" style="left:658.20px;top:220.36px;font:normal 8.4px/8.4px 'Liberation Sans',sans-serif;color:#444444;transform:scaleX(0.9820);transform-origin:0 0;">Valle Hermoso, 05 de mayo del 2022.</div>
<div class="t" style="left:500.80px;top:249.59px;font:normal 8.6px/8.6px 'Liberation Sans',sans-serif;color:#444444;letter-spacing:0.083px;transform-origin:0 0;">Dra.</div>
<div class="t" style="left:500.80px;top:258.79px;font:normal 8.6px/8.6px 'Liberation Sans',sans-serif;color:#444444;letter-spacing:-0.152px;transform-origin:0 0;">Mónica Segovia Corrales MSC.</div>
<div class="t" style="left:500.80px;top:267.86px;font:bold 8.4px/8.4px 'Liberation Sans',sans-serif;color:#111;transform:scaleX(0.8609);transform-origin:0 0;-webkit-text-stroke:0.12px #111;">DIRECTORA PROVINCIAL 1 DE SANTO DOMINGO DE LOS TSACHILAS</div>
<div class="t" style="left:500.80px;top:277.16px;font:bold 8.4px/8.4px 'Liberation Sans',sans-serif;color:#111;transform:scaleX(0.9223);transform-origin:0 0;-webkit-text-stroke:0.12px #111;">Presente. -</div>
<div class="t" style="left:500.80px;top:305.29px;font:normal 8.6px/8.6px 'Liberation Sans',sans-serif;color:#444444;letter-spacing:-0.003px;transform-origin:0 0;">De mi consideración:</div>
<div class="t" style="left:500.80px;top:324.19px;font:normal 8.6px/8.6px 'Liberation Sans',sans-serif;color:#444444;letter-spacing:0.165px;transform-origin:0 0;">Reciba  un  cordial  y  atento  saludo  a  nombre  del  Gobierno  Autónomo</div>
<div class="t" style="left:500.80px;top:334.19px;font:normal 8.6px/8.6px 'Liberation Sans',sans-serif;color:#444444;letter-spacing:0.030px;transform-origin:0 0;">Descentralizado Parroquial Rural de Valle Hermoso, perteneciente al Cantón</div>
<div class="t" style="left:500.80px;top:344.29px;font:normal 8.6px/8.6px 'Liberation Sans',sans-serif;color:#444444;letter-spacing:-0.169px;transform-origin:0 0;">Santo Domingo, Provincia de Santo Domingo de los Tsáchilas.</div>
<div class="t" style="left:500.70px;top:359.09px;font:normal 8.6px/8.6px 'Liberation Sans',sans-serif;color:#444444;letter-spacing:-0.059px;transform-origin:0 0;">En atención al</div>
<div class="t" style="left:556.10px;top:358.76px;font:bold 8.4px/8.4px 'Liberation Sans',sans-serif;color:#111;transform:scaleX(0.8908);transform-origin:0 0;-webkit-text-stroke:0.12px #111;">OFICIO CIRCULAR N°0324-DPSDT-2022</div>
<div class="t" style="left:696.50px;top:359.09px;font:normal 8.6px/8.6px 'Liberation Sans',sans-serif;color:#444444;letter-spacing:-0.210px;transform-origin:0 0;">, de fecha 04 abril de 2022,</div>
<div class="t" style="left:500.80px;top:368.69px;font:normal 8.6px/8.6px 'Liberation Sans',sans-serif;color:#444444;letter-spacing:0.058px;transform-origin:0 0;">dice lo siguiente De conformidad con lo dispuesto en el artículo 76 de la Ley</div>
<div class="t" style="left:500.80px;top:378.19px;font:normal 8.6px/8.6px 'Liberation Sans',sans-serif;color:#444444;letter-spacing:-0.144px;transform-origin:0 0;">Orgánica  de  la  Contraloría  General  del  Estado,  se  encuentra  realizando  la</div>
<div class="t" style="left:500.80px;top:387.49px;font:normal 8.6px/8.6px 'Liberation Sans',sans-serif;color:#444444;letter-spacing:-0.005px;transform-origin:0 0;">actualización de la base de datos del Catastro de entidades sujetas a control,</div>
<div class="t" style="left:500.80px;top:396.89px;font:normal 8.6px/8.6px 'Liberation Sans',sans-serif;color:#444444;letter-spacing:0.008px;transform-origin:0 0;">agradeceré a usted disponer a quien corresponda proporcione la información</div>
<div class="t" style="left:500.80px;top:406.19px;font:normal 8.6px/8.6px 'Liberation Sans',sans-serif;color:#444444;letter-spacing:-0.115px;transform-origin:0 0;">actualizada  conforme  el  anexo  1  adjunto  al  presente;  para  lo  cual  deberá</div>
<div class="t" style="left:500.80px;top:415.59px;font:normal 8.6px/8.6px 'Liberation Sans',sans-serif;color:#444444;letter-spacing:-0.032px;transform-origin:0 0;">remitir la documentación que valide la información ingresada así:</div>
<div class="t" style="left:526.10px;top:434.39px;font:normal 8.6px/8.6px 'Liberation Sans',sans-serif;color:#444444;letter-spacing:-0.027px;transform-origin:0 0;">Copia actualizada del Ruc</div>
<div class="t" style="left:526.10px;top:443.74px;font:normal 8.6px/8.6px 'Liberation Sans',sans-serif;color:#444444;letter-spacing:0.127px;transform-origin:0 0;">Copia del nombramiento</div>
<div class="t" style="left:526.10px;top:453.09px;font:normal 8.6px/8.6px 'Liberation Sans',sans-serif;color:#444444;letter-spacing:0.021px;transform-origin:0 0;">Copia Certificada de la Base Legal (creación o modificación)</div>
<div class="t" style="left:672.40px;top:422.76px;font:normal 12.4px/12.4px 'Liberation Sans',sans-serif;color:#c6c6c6;transform:scaleX(1.0352);transform-origin:0 0;">Activar Windows</div>
<div class="t" style="left:672.40px;top:438.64px;font:normal 9.6px/9.6px 'Liberation Sans',sans-serif;color:#c6c6c6;transform-origin:0 0;">Ve a Configuración para activar Windows.</div>
<div class="t" style="left:47.00px;top:47.50px;font:normal 8.0px/8.0px 'Liberation Sans',sans-serif;color:#a3a3a3;transform:scaleX(0.9445);transform-origin:0 0;">Cortar</div>
<div class="t" style="left:47.00px;top:61.90px;font:normal 8.0px/8.0px 'Liberation Sans',sans-serif;color:#a3a3a3;transform:scaleX(0.9331);transform-origin:0 0;">Copiar</div>
<div class="t" style="left:47.00px;top:76.90px;font:normal 8.0px/8.0px 'Liberation Sans',sans-serif;color:#333;transform:scaleX(0.9826);transform-origin:0 0;">Copiar formato</div>
<div class="t" style="left:9.20px;top:69.40px;font:normal 8.0px/8.0px 'Liberation Sans',sans-serif;color:#333;transform:scaleX(0.9036);transform-origin:0 0;">Pegar</div>
<div class="t" style="left:27.50px;top:92.67px;font:normal 7.8px/7.8px 'Liberation Sans',sans-serif;color:#444;transform:scaleX(0.9336);transform-origin:0 0;">Portapapeles</div>
<div class="t" style="left:188.00px;top:92.67px;font:normal 7.8px/7.8px 'Liberation Sans',sans-serif;color:#444;transform:scaleX(0.9472);transform-origin:0 0;">Fuente</div>
<div class="t" style="left:364.00px;top:92.67px;font:normal 7.8px/7.8px 'Liberation Sans',sans-serif;color:#444;transform:scaleX(0.9148);transform-origin:0 0;">Párrafo</div>
<div class="t" style="left:598.00px;top:92.67px;font:normal 7.8px/7.8px 'Liberation Sans',sans-serif;color:#444;transform:scaleX(0.8795);transform-origin:0 0;">Estilos</div>
<div class="t" style="left:791.60px;top:92.67px;font:normal 7.8px/7.8px 'Liberation Sans',sans-serif;color:#444;transform:scaleX(0.9305);transform-origin:0 0;">Edición</div>
<div class="t" style="left:116.10px;top:52.03px;font:normal 8.2px/8.2px 'Liberation Sans',sans-serif;color:#333;transform:scaleX(0.9412);transform-origin:0 0;">Century Gothic</div>
<div class="t" style="left:189.80px;top:52.03px;font:normal 8.2px/8.2px 'Liberation Sans',sans-serif;color:#333;transform:scaleX(0.8471);transform-origin:0 0;">11</div>
<div class="t" style="left:785.60px;top:47.50px;font:normal 8.0px/8.0px 'Liberation Sans',sans-serif;color:#333;transform:scaleX(0.9074);transform-origin:0 0;">Buscar</div>
<div class="t" style="left:785.60px;top:61.90px;font:normal 8.0px/8.0px 'Liberation Sans',sans-serif;color:#333;transform:scaleX(0.9179);transform-origin:0 0;">Reemplazar</div>
<div class="t" style="left:785.60px;top:76.90px;font:normal 8.0px/8.0px 'Liberation Sans',sans-serif;color:#333;transform:scaleX(0.9327);transform-origin:0 0;">Seleccionar</div>
<div class="t" style="left:118.60px;top:71.34px;font:bold 8.3px/8.3px 'Liberation Sans',sans-serif;color:#444;transform:scaleX(0.9333);transform-origin:0 0;">N</div>
<div class="t" style="left:133.40px;top:71.34px;font:italic bold 8.3px/8.3px 'Liberation Sans',sans-serif;color:#444;transform:scaleX(0.9667);transform-origin:0 0;">K</div>
<div class="t" style="left:149.00px;top:71.34px;font:bold 8.3px/8.3px 'Liberation Sans',sans-serif;color:#555;transform:scaleX(1.0096);transform-origin:0 0;">S</div>
<div class="t" style="left:172.40px;top:72.28px;font:bold 7.2px/7.2px 'Liberation Sans',sans-serif;color:#666;transform:scaleX(0.8555);transform-origin:0 0;">abc</div>
<div class="t" style="left:189.80px;top:71.09px;font:bold 8.6px/8.6px 'Liberation Sans',sans-serif;color:#444;transform-origin:0 0;">x</div>
<div class="t" style="left:195.40px;top:75.63px;font:bold 4.2px/4.2px 'Liberation Sans',sans-serif;color:#2e6fc4;transform:scaleX(0.8533);transform-origin:0 0;">2</div>
<div class="t" style="left:205.30px;top:71.09px;font:bold 8.6px/8.6px 'Liberation Sans',sans-serif;color:#444;transform-origin:0 0;">x</div>
<div class="t" style="left:210.60px;top:71.23px;font:bold 4.2px/4.2px 'Liberation Sans',sans-serif;color:#2e6fc4;transform:scaleX(0.8533);transform-origin:0 0;">2</div>
<div class="t" style="left:220.80px;top:51.80px;font:normal 9.3px/9.3px 'Liberation Sans',sans-serif;color:#555;transform:scaleX(0.9511);transform-origin:0 0;">A</div>
<div class="t" style="left:236.80px;top:53.50px;font:normal 7.3px/7.3px 'Liberation Sans',sans-serif;color:#555;transform:scaleX(1.1077);transform-origin:0 0;">A</div>
<div class="t" style="left:254.00px;top:52.15px;font:normal 9.0px/9.0px 'Liberation Sans',sans-serif;color:#666;transform:scaleX(0.9532);transform-origin:0 0;">Aa</div>
<div class="t" style="left:284.00px;top:50.98px;font:normal 6.5px/6.5px 'Liberation Sans',sans-serif;color:#666;transform:scaleX(1.0360);transform-origin:0 0;">A</div>
<div class="t" style="left:248.60px;top:70.84px;font:bold 5.6px/5.6px 'Liberation Sans',sans-serif;color:#555;transform:scaleX(0.8574);transform-origin:0 0;">ab</div>
<div class="t" style="left:424.40px;top:50.83px;font:bold 5.5px/5.5px 'Liberation Sans',sans-serif;color:#2e6fc4;transform:scaleX(1.2047);transform-origin:0 0;">A</div>
<div class="t" style="left:424.60px;top:56.12px;font:bold 5.5px/5.5px 'Liberation Sans',sans-serif;color:#9b59b6;transform:scaleX(1.3630);transform-origin:0 0;">Z</div>
<div class="t" style="left:445.40px;top:51.78px;font:normal 9.2px/9.2px 'Liberation Sans',sans-serif;color:#666;transform:scaleX(1.2962);transform-origin:0 0;">¶</div>
<div class="t" style="left:773.20px;top:59.22px;font:normal 6.8px/6.8px 'Liberation Sans',sans-serif;color:#555;transform:scaleX(1.1107);transform-origin:0 0;">a</div>
<div class="t" style="left:777.40px;top:59.22px;font:normal 6.8px/6.8px 'Liberation Sans',sans-serif;color:#9b59b6;transform:scaleX(1.1636);transform-origin:0 0;">b</div>
<div class="t" style="left:775.30px;top:64.02px;font:normal 6.8px/6.8px 'Liberation Sans',sans-serif;color:#666;transform:scaleX(1.1107);transform-origin:0 0;">a</div>
<div class="t" style="left:779.40px;top:64.02px;font:normal 6.8px/6.8px 'Liberation Sans',sans-serif;color:#2e6fc4;transform:scaleX(1.1743);transform-origin:0 0;">c</div>
<div class="t" style="left:472.40px;top:54.98px;font:normal 9.2px/9.2px 'Liberation Sans',sans-serif;color:#222;transform:scaleX(1.0478);transform-origin:0 0;">AaBbCcI</div>
<div class="t" style="left:519.50px;top:54.98px;font:normal 9.2px/9.2px 'Liberation Sans',sans-serif;color:#222;transform:scaleX(1.1270);transform-origin:0 0;">AaBbCc</div>
<div class="t" style="left:565.90px;top:54.32px;font:normal 11.5px/11.5px 'Liberation Sans',sans-serif;color:#4a88cc;transform:scaleX(0.8984);transform-origin:0 0;">AaBbCc</div>
<div class="t" style="left:612.30px;top:54.98px;font:normal 9.2px/9.2px 'Liberation Sans',sans-serif;color:#4a88cc;transform:scaleX(1.0671);transform-origin:0 0;">AaBbCcI</div>
<div class="t" style="left:659.20px;top:54.98px;font:bold 9.2px/9.2px 'Liberation Serif',sans-serif;color:#111;transform:scaleX(1.0581);transform-origin:0 0;">AaBbCcI</div>
<div class="t" style="left:706.00px;top:55.49px;font:normal 8.6px/8.6px 'Liberation Sans',sans-serif;color:#2d5f92;transform:scaleX(0.9041);transform-origin:0 0;">AaBbCcDc</div>
<div class="t" style="left:475.70px;top:72.04px;font:normal 7.6px/7.6px 'Liberation Sans',sans-serif;color:#555;transform:scaleX(1.0205);transform-origin:0 0;">¶ Normal</div>
<div class="t" style="left:518.20px;top:72.04px;font:normal 7.6px/7.6px 'Liberation Sans',sans-serif;color:#555;transform:scaleX(0.9620);transform-origin:0 0;">Normal Sa...</div>
<div class="t" style="left:572.40px;top:72.04px;font:normal 7.6px/7.6px 'Liberation Sans',sans-serif;color:#555;transform:scaleX(0.9831);transform-origin:0 0;">Título 1</div>
<div class="t" style="left:619.50px;top:72.04px;font:normal 7.6px/7.6px 'Liberation Sans',sans-serif;color:#555;transform:scaleX(0.9555);transform-origin:0 0;">Título 2</div>
<div class="t" style="left:665.70px;top:72.04px;font:normal 7.6px/7.6px 'Liberation Sans',sans-serif;color:#555;transform:scaleX(0.9910);transform-origin:0 0;">Título 5</div>
<div class="t" style="left:712.80px;top:72.04px;font:normal 7.6px/7.6px 'Liberation Sans',sans-serif;color:#555;transform:scaleX(0.9910);transform-origin:0 0;">Título 6</div>
<div class="a" style="left:0;top:457px;width:886px;height:14.5px;background:#f3f3f3"></div>
<div class="a" style="left:0;top:471.5px;width:886px;height:2.5px;background:#1b2a36"></div>
<div class="a" style="left:174px;top:471.5px;width:32px;height:2.5px;background:#46535f"></div>
<div class="a" style="left:717px;top:457.4px;width:26px;height:13.6px;background:#c6c6c6"></div>
<svg style="left:0;top:0" width="886" height="474"><path d="M140.5 461 L144.5 462 L144.5 467 L140.5 466 Z M144.5 462 L148.5 461 L148.5 466 L144.5 467" fill="none" stroke="#777" stroke-width="0.8"/><circle cx="166" cy="464.5" r="3.6" fill="none" stroke="#555" stroke-width="0.9"/><path d="M167.5 465 L172 469.5 M171.5 465 L167.5 469.5" stroke="#444" stroke-width="1"/><path d="M700 460 L704.3 461 L704.3 467.4 L700 466.4 Z M704.3 461 L708.7 460 L708.7 466.4 L704.3 467.4 Z" fill="#cfcfcf" stroke="#888" stroke-width="0.8"/><rect x="726" y="460" width="9" height="8.5" fill="#a8a8a8" stroke="#7a7a7a" stroke-width="0.8"/><rect x="751.5" y="460" width="7.5" height="7.5" fill="#d8d8d8" stroke="#888" stroke-width="0.8"/><circle cx="759" cy="466.3" r="2.3" fill="#fff" stroke="#666" stroke-width="0.8"/><rect x="773" y="463.8" width="5.2" height="1" fill="#666"/><rect x="781.5" y="464" width="64.8" height="1" fill="#777"/><rect x="805.6" y="461" width="3.3" height="7.2" fill="#555"/><rect x="814.2" y="462.3" width="0.8" height="4.5" fill="#777"/><path d="M849.6 464.4 L854.5 464.4 M852 461.8 L852 467" stroke="#777" stroke-width="0.9"/></svg>
<div class="t" style="left:5.40px;top:460.54px;font:normal 7.6px/7.6px 'Liberation Sans',sans-serif;color:#383838;transform:scaleX(0.9519);transform-origin:0 0;">Página 177 de 336</div>
<div class="t" style="left:77.90px;top:460.54px;font:normal 7.6px/7.6px 'Liberation Sans',sans-serif;color:#383838;transform:scaleX(0.9492);transform-origin:0 0;">53788 palabras</div>
<div class="t" style="left:174.70px;top:460.54px;font:normal 7.6px/7.6px 'Liberation Sans',sans-serif;color:#383838;transform:scaleX(0.9705);transform-origin:0 0;">Accesibilidad: es necesario investigar</div>
<div class="t" style="left:862.80px;top:460.57px;font:normal 7.8px/7.8px 'Liberation Sans',sans-serif;color:#333;transform:scaleX(0.8969);transform-origin:0 0;">80%</div>
</body></html>
